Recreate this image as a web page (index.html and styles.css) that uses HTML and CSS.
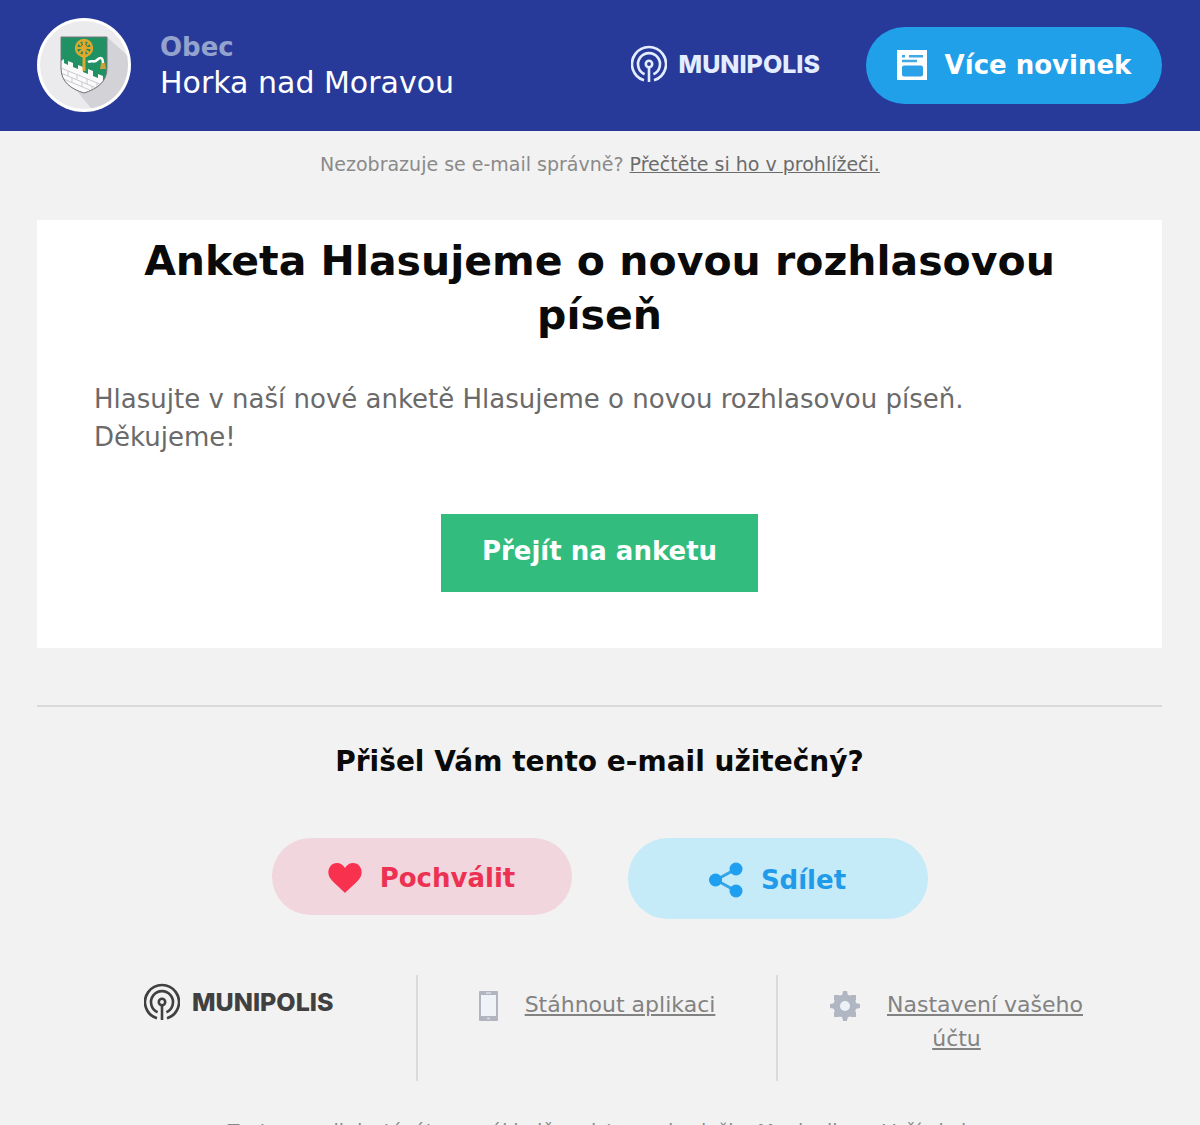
FILE: index.html
```html
<!DOCTYPE html>
<html lang="cs">
<head>
<meta charset="utf-8">
<meta name="viewport" content="width=device-width, initial-scale=1">
<title>Anketa – Horka nad Moravou</title>
<link rel="stylesheet" href="styles.css">
</head>
<body>
<svg class="defs" aria-hidden="true">
  <symbol id="signal" viewBox="0 0 36 38">
    <g fill="none" stroke="currentColor" stroke-width="2.6">
      <path d="M13 35.3A17 17 0 1 1 23 35.3"/>
      <path d="M13.6 29.2A11 11 0 1 1 22.4 29.2"/>
      <circle cx="18" cy="19" r="3.2"/>
      <path d="M18 22v15"/>
    </g>
  </symbol>
</svg>
<header class="topbar">
  <svg class="crest" viewBox="0 0 94 94" role="img" aria-label="Znak obce">
    <defs>
      <clipPath id="disc"><circle cx="47" cy="47" r="44"/></clipPath>
      <clipPath id="shield"><path d="M24 19H70V50C70 64 60 71 47 75C34 71 24 64 24 50Z"/></clipPath>
    </defs>
    <circle cx="47" cy="47" r="47" fill="#fff"/>
    <g clip-path="url(#disc)">
      <path d="M0 0H94V94H0Z" fill="#ebeaed"/>
      <path d="M70 19L110 55V110H70L40 73Z" fill="#d3d2d6"/>
    </g>
    <g clip-path="url(#shield)">
      <path d="M24 19H70V76H24Z" fill="#1f9163"/>
      <path d="M24 43L27 41V45L31 47V43L36 45V49L41 51V47L46 49V54L51 56V51L56 53V58L61 60V56L66 58V62L70 64V78H24Z" fill="#fafafa"/>
      <path d="M24 50L70 69M24 55L66 73M24 60L60 75M24 66L52 78M31 53V58M40 57V61M50 61V66M60 65V70M35 60V64M45 64V69M55 68V73" stroke="#c9c9cf" stroke-width="1" fill="none"/>
      <path d="M51 44C55 42 58 45 60 42C64 38 66 40 66 46" stroke="#fff" stroke-width="2.5" fill="none"/>
      <path d="M64 45h4l1 6h-6z" fill="#c9a43a"/>
      <g fill="none" stroke="#e0a92b">
        <circle cx="47" cy="30" r="8" stroke-width="2.4"/>
        <path d="M47 23V53" stroke-width="3"/>
        <path d="M40 30H54M42 25L52 35M52 25L42 35" stroke-width="2"/>
      </g>
      <path d="M44 28l2-2M49 32l2-1M44 34l2 1M49 26l1 2" stroke="#6b6a24" stroke-width="1"/>
    </g>
    <path d="M24 19H70V50C70 64 60 71 47 75C34 71 24 64 24 50Z" fill="none" stroke="#77777c" stroke-width="1"/>
  </svg>
  <div class="sender">
    <span class="sender-type">Obec</span>
    <span class="sender-name">Horka nad Moravou</span>
  </div>
  <div class="brand brand-light"><svg class="brand-mark" aria-hidden="true"><use href="#signal"/></svg><span>MUNIPOLIS</span></div>
  <a class="pill pill-news" href="#">
    <svg class="icon-news" viewBox="0 0 30 30" aria-hidden="true">
      <path d="M0 0H30V30H0Z" fill="#fff"/>
      <path d="M5 6.2H8M12 6.2H26M5 11H20" stroke="#41a9e4" stroke-width="2.4"/>
      <rect x="5" y="15.5" width="21" height="11" rx="2" fill="#2ba1e8"/>
    </svg>
    <span>Více novinek</span>
  </a>
</header>
<p class="preview">Nezobrazuje se e-mail správně? <a href="#">Přečtěte si ho v prohlížeči.</a></p>
<main class="card">
  <h1>Anketa Hlasujeme o novou rozhlasovou píseň</h1>
  <p>Hlasujte v naší nové anketě Hlasujeme o novou rozhlasovou píseň. Děkujeme!</p>
  <a class="cta" href="#">Přejít na anketu</a>
</main>
<section class="feedback">
  <h2>Přišel Vám tento e-mail užitečný?</h2>
  <div class="actions">
    <a class="pill pill-like" href="#">
      <svg class="icon-action" viewBox="0 0 34 36" aria-hidden="true"><path d="M17 33C14 29.500 3.500 21.500 1.200 16.500C-1.500 10 2.500 3 8.800 3C12.500 3 15.500 5 17 8C18.500 5 21.500 3 25.200 3C31.500 3 35.500 10 32.800 16.500C30.500 21.500 20 29.500 17 33Z" fill="#f8324e"/></svg>
      <span>Pochválit</span>
    </a>
    <a class="pill pill-share" href="#">
      <svg class="icon-action" viewBox="0 0 34 36" aria-hidden="true">
        <path d="M27 7L7 18L27 29" fill="none" stroke="#35a5ea" stroke-width="3"/>
        <g fill="#1f9ff0"><circle cx="27" cy="7" r="6.500"/><circle cx="6.500" cy="18" r="6.500"/><circle cx="27" cy="29" r="6.500"/></g>
      </svg>
      <span>Sdílet</span>
    </a>
  </div>
</section>
<footer>
  <div class="links">
    <div class="cell cell-brand"><div class="brand brand-dark"><svg class="brand-mark" aria-hidden="true"><use href="#signal"/></svg><span>MUNIPOLIS</span></div></div>
    <div class="cell cell-link">
      <svg class="icon-link icon-phone" viewBox="0 0 19 30" aria-hidden="true"><rect width="19" height="30" rx="1" fill="#b0b5bf"/><path d="M2 4H17V25H2Z" fill="#eff2f6"/><path d="M7 2H12M8 27.500H11" stroke="#d9dde4" stroke-width="1.500"/></svg>
      <a href="#">Stáhnout aplikaci</a>
    </div>
    <div class="cell cell-link cell-account">
      <svg class="icon-link" viewBox="0 0 30 30" aria-hidden="true">
        <g fill="#b1b6c3"><circle cx="15" cy="15" r="11.500"/><path d="M13 0H17L18 5H12ZM13 30H17L18 25H12ZM0 13V17L5 18V12ZM30 13V17L25 18V12Z"/><path d="M4 4H9L12 7L7 12L4 9ZM26 4V9L23 12L18 7L21 4ZM4 26V21L7 18L12 23L9 26ZM26 26H21L18 23L23 18L26 21Z"/></g>
        <circle cx="15" cy="15" r="5" fill="#edf2f8"/>
      </svg>
      <a href="#">Nastavení vašeho účtu</a>
    </div>
  </div>
  <p class="legal">Tento e-mail dostáváte na základě registrace do služby Munipolis ve Vaší obci.</p>
</footer>
</body>
</html>
```
FILE: styles.css
```css
* { box-sizing: border-box; }
body {
  margin: 0;
  background: #f2f2f2;
  color: #0a0a0a;
  font-family: "DejaVu Sans", Verdana, sans-serif;
  font-size: 26px;
}
h1, h2, p { margin: 0; }
svg { display: block; flex: none; }
.defs { position: absolute; width: 0; height: 0; }

.topbar {
  display: flex;
  align-items: center;
  padding: 18px 38px 19px 37px;
  background: #273a99;
}
.crest { width: 94px; height: 94px; }
.sender {
  display: flex;
  flex-direction: column;
  margin-left: 29px;
  line-height: 36px;
}
.sender-type { color: #93a3cd; font-weight: bold; }
.sender-name { color: #fff; font-size: 30px; }

.brand {
  display: flex;
  align-items: center;
  gap: 12px;
  font-family: Inter, "Liberation Sans", sans-serif;
  font-size: 25px;
  font-weight: 800;
  line-height: 38px;
}
.brand-mark { width: 36px; height: 38px; }
.brand-light { margin: 0 46px 2px auto; color: #e3edff; }
.brand-dark { color: #404040; }

.pill {
  display: flex;
  align-items: center;
  justify-content: center;
  gap: 18px;
  min-height: 77px;
  border-radius: 40px;
  font-weight: bold;
  text-decoration: none;
}
.pill-news { width: 296px; background: #21a0ea; color: #fff; }
.icon-news { width: 30px; height: 30px; }

.preview {
  padding: 20px 37px 0;
  color: #8a8a8a;
  font-size: 19px;
  line-height: 26px;
  text-align: center;
}
.preview a { color: #6b6b6b; }

.card {
  display: flex;
  flex-direction: column;
  margin: 43px 38px 0 37px;
  padding: 14px 57px 56px;
  background: #fff;
}
h1 { font-size: 41px; line-height: 54px; text-align: center; }
.card p { margin-top: 38px; color: #6a6a6a; line-height: 38px; }
.cta {
  align-self: center;
  margin-top: 58px;
  padding: 18px 41px 22px;
  background: #32bc7e;
  color: #fff;
  font-weight: bold;
  line-height: 38px;
  text-decoration: none;
}

.feedback {
  margin: 57px 38px 0 37px;
  padding-top: 36px;
  border-top: 2px solid #dadada;
}
h2 { font-size: 28px; line-height: 38px; text-align: center; }
.actions {
  display: flex;
  align-items: flex-start;
  justify-content: center;
  gap: 56px;
  margin-top: 57px;
}
.actions .pill { width: 300px; padding-top: 2px; }
.icon-action { width: 34px; height: 36px; }
.pill-like { background: #f1d6dd; color: #ec3152; }
.actions .pill-share { min-height: 81px; background: #c5eaf8; color: #1f9bea; }

.links {
  display: grid;
  grid-template-columns: 381fr 360fr 384fr;
  margin: 56px 38px 0 37px;
  color: #828282;
  font-size: 22px;
  line-height: 34px;
}
.links a { color: #828282; }
.cell { min-height: 106px; }
.cell:not(:last-child) { border-right: 2px solid #dadada; }
.cell-brand { padding: 8px 0 0 107px; }
.cell-link { padding: 13px 0 0; text-align: center; }
.cell-account { padding: 13px 76px 0 49px; }
.icon-link {
  display: inline-block;
  width: 30px;
  height: 30px;
  margin-right: 20px;
  vertical-align: middle;
}
.icon-phone { width: 19px; }
.legal {
  padding: 36px 37px 40px;
  color: #8a8a8a;
  font-size: 19px;
  line-height: 28px;
  text-align: center;
}
```
